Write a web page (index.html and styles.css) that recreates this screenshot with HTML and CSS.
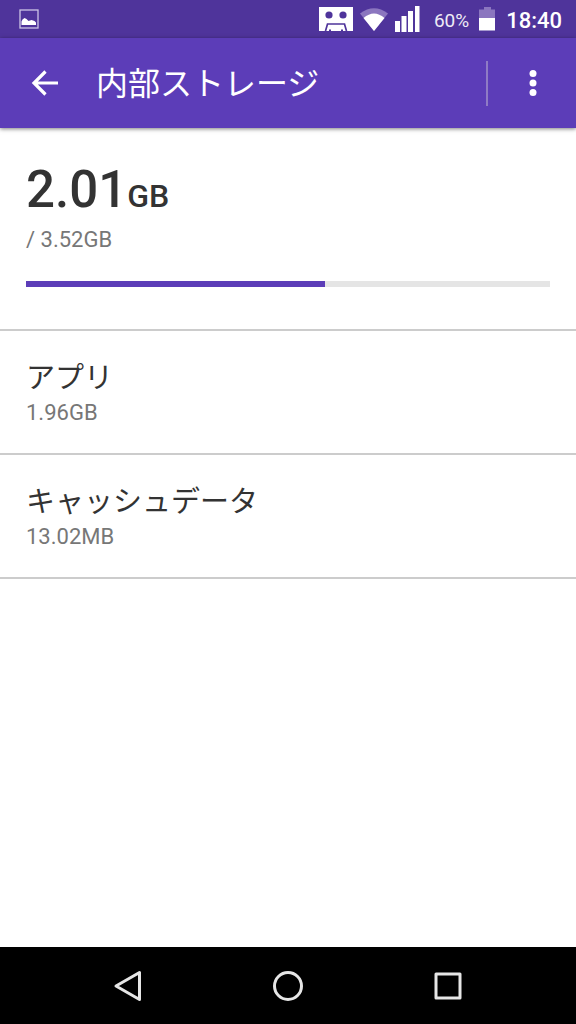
FILE: index.html
```html
<!DOCTYPE html>
<html lang="ja">
<head>
<meta charset="utf-8">
<meta name="viewport" content="width=device-width, initial-scale=1">
<title>内部ストレージ</title>
<link rel="stylesheet" href="styles.css">
</head>
<body>
<div class="screen">
  <div class="status-bar">
    <svg class="status-picture" width="20" height="20" viewBox="0 0 20 20" aria-hidden="true">
      <rect x="1" y="1" width="18" height="18" fill="none" stroke="#cdc4e6" stroke-width="1.3"/>
      <path d="M2.500 16v-3.500l1-2 2-1.500 2 1 2 2 3-1 3 1 1.500 1.500V16z" fill="#fff"/>
    </svg>
    <svg class="status-tape" width="34" height="24" viewBox="0 0 34 24" aria-hidden="true">
      <path d="M0 0h34v24H0z" fill="#fff"/>
      <g fill="#4f349b"><circle cx="10" cy="8" r="3.6"/><circle cx="24" cy="8" r="3.6"/></g>
      <path d="M6.500 24l2-7h17l2 7" fill="none" stroke="#4f349b" stroke-width="1.700"/>
      <path d="M10 22.500h2V24h-2zM22 22.500h2V24h-2z" fill="#4f349b"/>
    </svg>
    <svg class="status-wifi" width="28" height="23" viewBox="0 0 28 23" aria-hidden="true">
      <path d="M0 5.500Q14-5 28 5.500L14 23z" fill="#8b76bf"/>
      <path d="M3.500 10Q14 1 24.500 10L14 23z" fill="#fff"/>
    </svg>
    <svg class="status-signal" width="25" height="26" viewBox="0 0 25 26" aria-hidden="true">
      <path d="M0 15h5v11H0zM6.500 10h5v16h-5zM13 5h5v21h-5zM20 0h4.500v26H20z" fill="#fff"/>
    </svg>
    <span class="battery-level">60%</span>
    <svg class="status-battery" width="16" height="24" viewBox="0 0 16 24" aria-hidden="true">
      <path d="M5 0h7v2.500h4V12H0V2.500h5z" fill="#8b76bf"/>
      <path d="M0 11h16v12.500H0z" fill="#fff"/>
    </svg>
    <time class="clock">18:40</time>
  </div>
  <header class="app-bar">
    <button class="icon-button" type="button" aria-label="戻る">
      <svg width="28" height="28" viewBox="0 0 28 28" aria-hidden="true">
        <path d="M27 14H4M14.500 2.500L3 14l11.500 11.500" fill="none" stroke="#fff" stroke-width="3.200"/>
      </svg>
    </button>
    <h1 class="title">内部ストレージ</h1>
    <button class="icon-button menu-button" type="button" aria-label="メニュー">
      <svg width="8" height="28" viewBox="0 0 8 28" fill="#fff" aria-hidden="true">
        <circle cx="4" cy="4.500" r="3.500"/><circle cx="4" cy="14" r="3.500"/><circle cx="4" cy="23.500" r="3.500"/>
      </svg>
    </button>
  </header>
  <main class="content">
    <section class="summary">
      <p class="used">2.01<span class="unit">GB</span></p>
      <p class="amount">/ 3.52GB</p>
      <div class="meter" role="progressbar" aria-label="使用量" aria-valuenow="57" aria-valuemin="0" aria-valuemax="100">
        <div class="meter-fill" style="width: 57%"></div>
      </div>
    </section>
    <ul class="list">
      <li><button class="row" type="button"><span class="row-name">アプリ</span><span class="amount">1.96GB</span></button></li>
      <li><button class="row" type="button"><span class="row-name">キャッシュデータ</span><span class="amount">13.02MB</span></button></li>
    </ul>
  </main>
  <nav class="nav-bar">
    <button class="nav-button" type="button" aria-label="戻る">
      <svg width="32" height="32" viewBox="0 0 32 32" aria-hidden="true"><path d="M27.500 2.500v27L4 16z"/></svg>
    </button>
    <button class="nav-button" type="button" aria-label="ホーム">
      <svg width="32" height="32" viewBox="0 0 32 32" aria-hidden="true"><circle cx="16" cy="16" r="13.500"/></svg>
    </button>
    <button class="nav-button" type="button" aria-label="最近のアプリ">
      <svg width="32" height="32" viewBox="0 0 32 32" aria-hidden="true"><path d="M4 4h24v24H4z"/></svg>
    </button>
  </nav>
</div>
</body>
</html>
```
FILE: styles.css
```css
* {
  box-sizing: border-box;
}

body,
h1,
p,
ul {
  margin: 0;
  padding: 0;
}

body {
  background: #fff;
  color: #333;
  font-family: Roboto, "Noto Sans CJK JP", sans-serif;
}

button {
  padding: 0;
  border: 0;
  background: none;
  color: inherit;
  font: inherit;
}

svg {
  display: block;
  flex: none;
}

.screen {
  display: flex;
  flex-direction: column;
  min-height: 100vh;
}

.status-bar {
  display: flex;
  align-items: center;
  height: 38px;
  padding: 0 14px 0 19px;
  background: #4f349b;
  color: #fff;
}

.status-picture {
  margin-right: auto;
}

.status-wifi {
  margin-left: 7px;
}

.status-signal {
  margin: 0 14px 0 7px;
}

.battery-level {
  padding-top: 2px;
  color: #eeebf6;
  font-size: 19px;
}

.status-battery {
  margin: 0 11px 0 10px;
}

.clock {
  padding-top: 2px;
  font-size: 22px;
  font-weight: 500;
}

.app-bar {
  display: flex;
  align-items: center;
  height: 90px;
  background: #5c3db8;
  color: #fff;
  box-shadow: 0 1px 4px rgba(0, 0, 0, 0.5);
}

.icon-button {
  display: flex;
  align-items: center;
  justify-content: center;
  width: 90px;
  height: 45px;
}

.title {
  flex: 1;
  padding: 2px 0 0 6px;
  font-size: 32px;
  font-weight: 400;
  line-height: 45px;
}

.menu-button {
  padding-left: 2px;
  border-left: 2px solid #8f7bc5;
}

.content {
  flex: 1;
}

.summary {
  padding: 34px 26px 42px;
}

.used {
  font-size: 51px;
  font-weight: 500;
  line-height: 56px;
}

.unit {
  font-size: 32px;
}

.amount {
  color: #777;
  font-size: 22px;
  line-height: 32px;
}

.meter {
  height: 6px;
  margin-top: 25px;
  background: #e5e5e5;
}

.meter-fill {
  height: 100%;
  background: #5c3db8;
}

.list {
  border-top: 2px solid #ccc;
  list-style: none;
}

.row {
  display: flex;
  flex-direction: column;
  width: 100%;
  padding: 28px 26px 24px;
  border-bottom: 2px solid #ccc;
  text-align: left;
}

.row-name {
  font-size: 29px;
  line-height: 38px;
}

.nav-bar {
  display: flex;
  justify-content: center;
  height: 77px;
  background: #000;
}

.nav-button {
  display: flex;
  align-items: center;
  justify-content: center;
  width: 160px;
}

.nav-button svg {
  fill: none;
  stroke: #e6e6e6;
  stroke-width: 3px;
  stroke-linejoin: round;
}
```
